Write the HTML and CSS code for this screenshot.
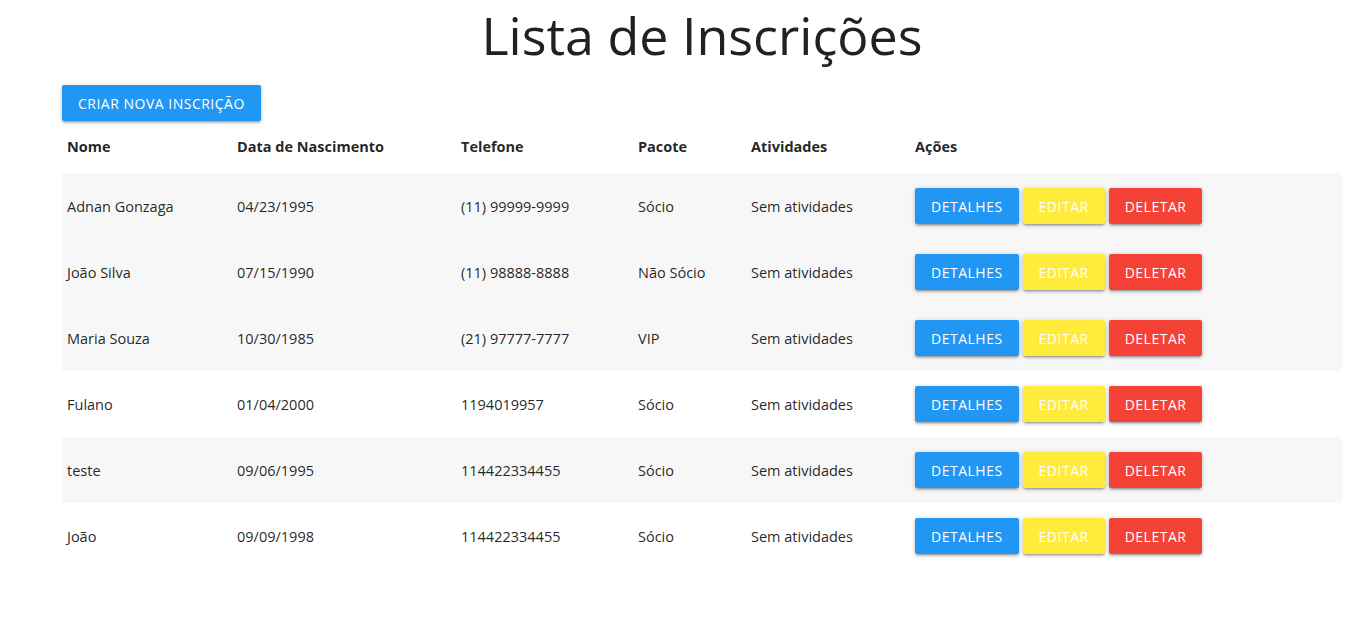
FILE: index.html
```html
<!DOCTYPE html>
<html lang="pt-BR">
<head>
<meta charset="utf-8">
<title>Lista de Inscrições</title>
<link rel="stylesheet" href="styles.css">
</head>
<body>
<div class="container">
  <h1 class="title">Lista de Inscrições</h1>
  <div class="top-actions"><button class="btn blue">Criar nova inscrição</button></div>
  <table class="table">
    <colgroup>
      <col class="c-nome"><col class="c-data"><col class="c-tel"><col class="c-pac"><col class="c-ativ"><col class="c-acoes">
    </colgroup>
    <thead>
      <tr><th>Nome</th><th>Data de Nascimento</th><th>Telefone</th><th>Pacote</th><th>Atividades</th><th>Ações</th></tr>
    </thead>
    <tbody>
      <tr class="shaded"><td>Adnan Gonzaga</td><td>04/23/1995</td><td>(11) 99999-9999</td><td>Sócio</td><td>Sem atividades</td><td><div class="acts"><button class="btn blue">Detalhes</button><button class="btn yellow">Editar</button><button class="btn red">Deletar</button></div></td></tr>
      <tr class="shaded"><td>João Silva</td><td>07/15/1990</td><td>(11) 98888-8888</td><td>Não Sócio</td><td>Sem atividades</td><td><div class="acts"><button class="btn blue">Detalhes</button><button class="btn yellow">Editar</button><button class="btn red">Deletar</button></div></td></tr>
      <tr class="shaded"><td>Maria Souza</td><td>10/30/1985</td><td>(21) 97777-7777</td><td>VIP</td><td>Sem atividades</td><td><div class="acts"><button class="btn blue">Detalhes</button><button class="btn yellow">Editar</button><button class="btn red">Deletar</button></div></td></tr>
      <tr><td>Fulano</td><td>01/04/2000</td><td>1194019957</td><td>Sócio</td><td>Sem atividades</td><td><div class="acts"><button class="btn blue">Detalhes</button><button class="btn yellow">Editar</button><button class="btn red">Deletar</button></div></td></tr>
      <tr class="shaded"><td>teste</td><td>09/06/1995</td><td>114422334455</td><td>Sócio</td><td>Sem atividades</td><td><div class="acts"><button class="btn blue">Detalhes</button><button class="btn yellow">Editar</button><button class="btn red">Deletar</button></div></td></tr>
      <tr><td>João</td><td>09/09/1998</td><td>114422334455</td><td>Sócio</td><td>Sem atividades</td><td><div class="acts"><button class="btn blue">Detalhes</button><button class="btn yellow">Editar</button><button class="btn red">Deletar</button></div></td></tr>
    </tbody>
  </table>
</div>
</body>
</html>
```

FILE: styles.css
```css
html, body {
  margin: 0;
  padding: 0;
  background: #fff;
}
body {
  font-family: "Open Sans", "Noto Sans", sans-serif;
  color: rgba(0, 0, 0, 0.87);
  font-size: 15px;
}
.container {
  width: 1280px;
  margin: 0 auto 0 62px;
}
.title {
  margin: 0 0 15px;
  padding-top: 2px;
  height: 68px;
  font-size: 52px;
  line-height: 66px;
  font-weight: 400;
  text-align: center;
  color: #212121;
}
.top-actions {
  display: flex;
}
.btn {
  display: inline-flex;
  align-items: center;
  justify-content: center;
  height: 36px;
  padding: 0 16px;
  border: none;
  border-radius: 2px;
  font-family: inherit;
  font-size: 14px;
  letter-spacing: 0.5px;
  text-transform: uppercase;
  color: #fff;
  cursor: pointer;
  box-shadow: 0 2px 2px 0 rgba(0,0,0,0.14), 0 3px 1px -2px rgba(0,0,0,0.12), 0 1px 5px 0 rgba(0,0,0,0.2);
}
.blue { background: #2196f3; }
.yellow { background: #ffeb3b; }
.red { background: #f44336; }
.table {
  width: 1280px;
  border-collapse: collapse;
  table-layout: fixed;
}
.c-nome { width: 170px; }
.c-data { width: 224px; }
.c-tel { width: 177px; }
.c-pac { width: 113px; }
.c-ativ { width: 164px; }
.c-acoes { width: 432px; }
.table th, .table td {
  text-align: left;
  padding: 15px 5px;
  line-height: 22px;
  vertical-align: middle;
  font-size: 14.5px;
}
.table th {
  font-weight: 700;
}
.table td {
  height: 36px;
  padding-top: 16px;
  padding-bottom: 14px;
}
.table tr.shaded {
  background: #f7f7f7;
}
.acts {
  display: flex;
  gap: 4px;
  margin-top: -1px;
  margin-bottom: 1px;
}
```
